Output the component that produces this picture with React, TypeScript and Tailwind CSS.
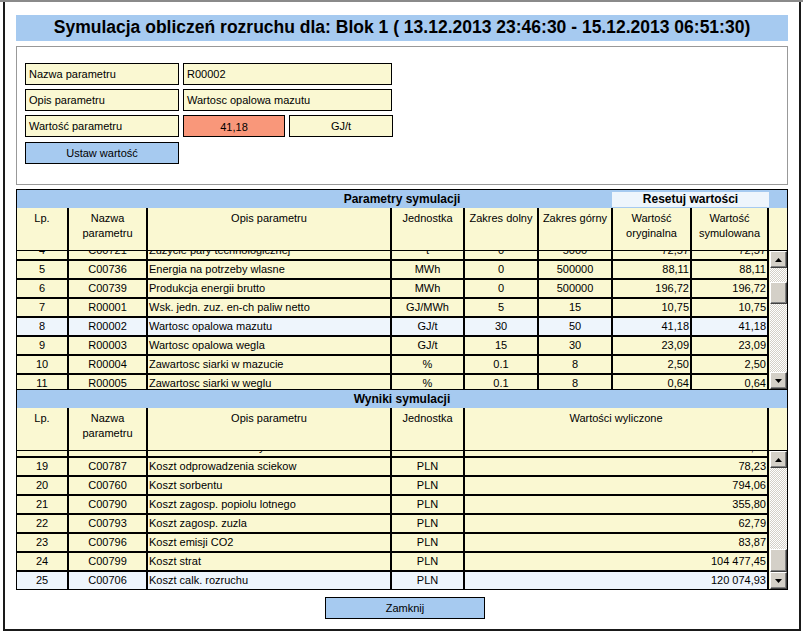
import React from "react";

type ParamRow = {
  lp: string;
  name: string;
  desc: string;
  unit: string;
  min: string;
  max: string;
  orig: string;
  sim: string;
  active?: boolean;
};

type ResultRow = {
  lp: string;
  name: string;
  desc: string;
  unit: string;
  value: string;
  active?: boolean;
};

const paramRows: ParamRow[] = [
  { lp: "4", name: "C00721", desc: "Zuzycie pary technologicznej", unit: "t", min: "0", max: "5000", orig: "72,57", sim: "72,57" },
  { lp: "5", name: "C00736", desc: "Energia na potrzeby wlasne", unit: "MWh", min: "0", max: "500000", orig: "88,11", sim: "88,11" },
  { lp: "6", name: "C00739", desc: "Produkcja energii brutto", unit: "MWh", min: "0", max: "500000", orig: "196,72", sim: "196,72" },
  { lp: "7", name: "R00001", desc: "Wsk. jedn. zuz. en-ch paliw netto", unit: "GJ/MWh", min: "5", max: "15", orig: "10,75", sim: "10,75" },
  { lp: "8", name: "R00002", desc: "Wartosc opalowa mazutu", unit: "GJ/t", min: "30", max: "50", orig: "41,18", sim: "41,18", active: true },
  { lp: "9", name: "R00003", desc: "Wartosc opalowa wegla", unit: "GJ/t", min: "15", max: "30", orig: "23,09", sim: "23,09" },
  { lp: "10", name: "R00004", desc: "Zawartosc siarki w mazucie", unit: "%", min: "0.1", max: "8", orig: "2,50", sim: "2,50" },
  { lp: "11", name: "R00005", desc: "Zawartosc siarki w weglu", unit: "%", min: "0.1", max: "8", orig: "0,64", sim: "0,64" },
];

const resultRows: ResultRow[] = [
  { lp: "18", name: "C00784", desc: "Koszt uzdatniania wody", unit: "PLN", value: "12,40" },
  { lp: "19", name: "C00787", desc: "Koszt odprowadzenia sciekow", unit: "PLN", value: "78,23" },
  { lp: "20", name: "C00760", desc: "Koszt sorbentu", unit: "PLN", value: "794,06" },
  { lp: "21", name: "C00790", desc: "Koszt zagosp. popiolu lotnego", unit: "PLN", value: "355,80" },
  { lp: "22", name: "C00793", desc: "Koszt zagosp. zuzla", unit: "PLN", value: "62,79" },
  { lp: "23", name: "C00796", desc: "Koszt emisji CO2", unit: "PLN", value: "83,87" },
  { lp: "24", name: "C00799", desc: "Koszt strat", unit: "PLN", value: "104 477,45" },
  { lp: "25", name: "C00706", desc: "Koszt calk. rozruchu", unit: "PLN", value: "120 074,93", active: true },
];

const COLS1 = "grid grid-cols-[52px_79px_244px_73px_74px_74px_79px_77px]";
const COLS2 = "grid grid-cols-[52px_79px_244px_73px_304px]";

const cell = "border-r-2 border-black whitespace-nowrap overflow-hidden";
const headCell = "border-r-2 border-black text-center pt-[3px] leading-[15px]";

const ScrollButton = ({ up }: { up?: boolean }) => (
  <div className="h-[17px] w-[17px] bg-[#d4d0c8] border border-t-white border-l-white border-r-[#404040] border-b-[#404040] shadow-[inset_-1px_-1px_0_#808080] flex items-center justify-center">
    <svg width="7" height="4" viewBox="0 0 7 4">
      {up ? <polygon points="3.5,0 7,4 0,4" fill="black" /> : <polygon points="0,0 7,0 3.5,4" fill="black" />}
    </svg>
  </div>
);

const ScrollBar = ({ thumb }: { thumb: string }) => (
  <div className="w-[18px] h-full flex flex-col pl-px bg-[#faf8d2]">
    <ScrollButton up />
    <div className="flex-1 w-[17px] bg-[image:repeating-conic-gradient(#d4d0c8_0_25%,#ffffff_0_50%)] bg-[length:2px_2px]">
      <div className={`w-[17px] bg-[#d4d0c8] border border-t-white border-l-white border-r-[#404040] border-b-[#404040] shadow-[inset_-1px_-1px_0_#808080] ${thumb}`} />
    </div>
    <ScrollButton />
  </div>
);

const BlueBar = ({ title, children }: { title: string; children?: React.ReactNode }) => (
  <div className="h-[19px] border-t border-black bg-[#a6caf0] grid grid-cols-[1fr_auto_1fr] items-center">
    <div />
    <div className="font-bold text-[12px] leading-[18px]">{title}</div>
    <div className="flex justify-end">{children}</div>
  </div>
);

const Box = ({ className, children }: { className: string; children?: React.ReactNode }) => (
  <div className={`h-[22px] border border-black flex items-center ${className}`}>{children}</div>
);

export default function App() {
  return (
    <div className="w-[803px] h-[637px] bg-white border-t-2 border-[#8a8a8a] font-['Liberation_Sans',Arial,sans-serif] text-[11px] text-black">
      <div className="ml-[3px] w-[798px] border-x-2 border-b-2 border-[#1a1a1a] pl-[11px] pt-[13px] pb-[10px]">
        {/* naglowek */}
        <div className="w-[772px] h-[26px] bg-[#a6caf0] flex items-center justify-center">
          <h1 className="font-bold text-[17.5px] leading-none">
            Symulacja obliczeń rozruchu dla: Blok 1 ( 13.12.2013 23:46:30 - 15.12.2013 06:51:30)
          </h1>
        </div>

        {/* edycja parametru */}
        <div className="w-[772px] h-[139px] mt-[5px] border border-[#999] pl-[8px] pt-[16px]">
          <div className="flex flex-col gap-[4px]">
            <div className="flex gap-[4px]">
              <Box className="w-[154px] bg-[#faf8d2] pl-[3px]">Nazwa parametru</Box>
              <Box className="w-[209px] bg-[#faf8d2] pl-[3px]">R00002</Box>
            </div>
            <div className="flex gap-[4px]">
              <Box className="w-[154px] bg-[#faf8d2] pl-[3px]">Opis parametru</Box>
              <Box className="w-[209px] bg-[#faf8d2] pl-[3px]">Wartosc opalowa mazutu</Box>
            </div>
            <div className="flex gap-[4px]">
              <Box className="w-[154px] bg-[#faf8d2] pl-[3px]">Wartość parametru</Box>
              <Box className="w-[102px] bg-[#f9977a] justify-center pt-[2px]">41,18</Box>
              <Box className="w-[104px] bg-[#faf8d2] justify-center">GJ/t</Box>
            </div>
          </div>
          <button className="mt-[5px] w-[154px] h-[22px] border border-black bg-[#a6caf0] text-[11px]">
            Ustaw wartość
          </button>
        </div>

        {/* tabele */}
        <div className="w-[772px] mt-[4px] border-x border-b border-black">
          <BlueBar title="Parametry symulacji">
            <div className="w-[157px] h-[15px] mr-[18px] mt-px bg-[#eef5fc] font-bold text-[12px] leading-[15px] text-center">
              Resetuj wartości
            </div>
          </BlueBar>
          <div className="flex h-[43px] bg-[#faf8d2] border-b border-black">
            <div className={COLS1}>
              <div className={headCell}>Lp.</div>
              <div className={headCell}>Nazwa<br />parametru</div>
              <div className={headCell}>Opis parametru</div>
              <div className={headCell}>Jednostka</div>
              <div className={headCell}>Zakres dolny</div>
              <div className={headCell}>Zakres górny</div>
              <div className={headCell}>Wartość<br />oryginalna</div>
              <div className={headCell}>Wartość<br />symulowana</div>
            </div>
          </div>
          <div className="flex h-[138px] overflow-hidden">
            <div className="w-[752px] h-[138px] overflow-hidden">
              <div className="-mt-[9px]">
                {paramRows.map((r) => (
                  <div key={r.lp} className={`${COLS1} h-[19px] leading-[17px] border-b-2 border-black ${r.active ? "bg-[#eef5fc]" : "bg-[#faf8d2]"}`}>
                    <div className={`${cell} text-center`}>{r.lp}</div>
                    <div className={`${cell} text-center`}>{r.name}</div>
                    <div className={`${cell} pl-px`}>{r.desc}</div>
                    <div className={`${cell} text-center`}>{r.unit}</div>
                    <div className={`${cell} text-center`}>{r.min}</div>
                    <div className={`${cell} text-center`}>{r.max}</div>
                    <div className={`${cell} text-right pr-px`}>{r.orig}</div>
                    <div className={`${cell} text-right pr-px`}>{r.sim}</div>
                  </div>
                ))}
              </div>
            </div>
            <ScrollBar thumb="mt-[14px] h-[22px]" />
          </div>

          <BlueBar title="Wyniki symulacji" />
          <div className="flex h-[43px] bg-[#faf8d2] border-b border-black">
            <div className={COLS2}>
              <div className={headCell}>Lp.</div>
              <div className={headCell}>Nazwa<br />parametru</div>
              <div className={headCell}>Opis parametru</div>
              <div className={headCell}>Jednostka</div>
              <div className={headCell}>Wartości wyliczone</div>
            </div>
          </div>
          <div className="flex h-[138px] overflow-hidden">
            <div className="w-[752px] h-[138px] overflow-hidden">
              <div className="-mt-[12px]">
                {resultRows.map((r) => (
                  <div key={r.lp} className={`${COLS2} h-[19px] leading-[17px] border-b-2 border-black ${r.active ? "bg-[#eef5fc]" : "bg-[#faf8d2]"}`}>
                    <div className={`${cell} text-center`}>{r.lp}</div>
                    <div className={`${cell} text-center`}>{r.name}</div>
                    <div className={`${cell} pl-px`}>{r.desc}</div>
                    <div className={`${cell} text-center`}>{r.unit}</div>
                    <div className={`${cell} text-right pr-px`}>{r.value}</div>
                  </div>
                ))}
              </div>
            </div>
            <ScrollBar thumb="mt-[81px] h-[23px]" />
          </div>
        </div>

        <button className="block mt-[7px] ml-[309px] w-[160px] h-[22px] border border-black bg-[#a6caf0] text-[11px]">
          Zamknij
        </button>
      </div>
    </div>
  );
}
